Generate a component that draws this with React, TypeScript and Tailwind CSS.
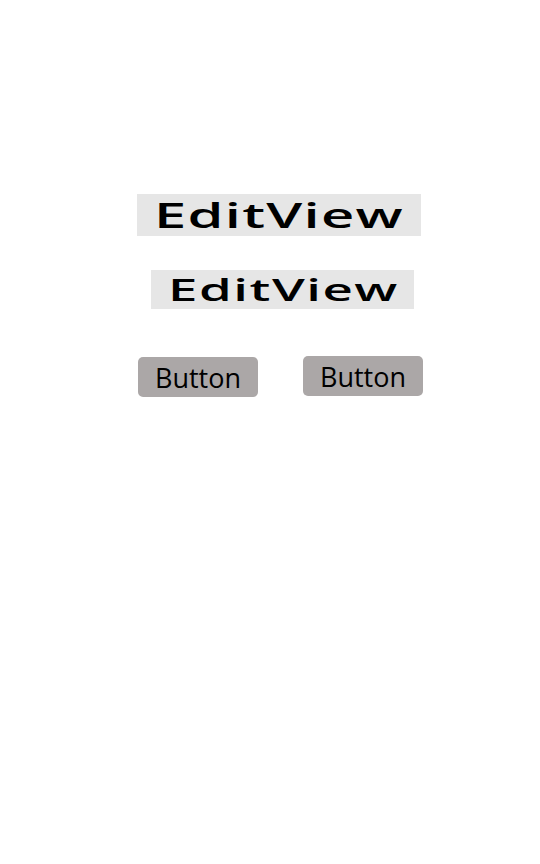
import React from "react";

export default function App() {
  return (
    <div
      className="min-h-[864px] w-[540px] bg-white pt-[194px]"
      style={{ fontFamily: '"Open Sans", "Noto Sans", sans-serif' }}
    >
      <div className="ml-[137px] flex h-[42px] w-[284px] items-center bg-[#e6e6e6] pl-[17px]">
        <span className="inline-block origin-left scale-x-[1.7] text-[34px] font-[550] leading-none tracking-[0.75px] text-black">
          EditView
        </span>
      </div>
      <div className="ml-[151px] mt-[34px] flex h-[39px] w-[263px] items-center bg-[#e6e6e6] pl-[17px]">
        <span className="inline-block origin-left scale-x-[1.7] text-[31px] font-[550] leading-none tracking-[0.9px] text-black">
          EditView
        </span>
      </div>
      <div className="mt-[47px] flex items-start">
        <div className="ml-[138px] mt-px flex h-[40px] w-[120px] items-center justify-center rounded-[5px] bg-[#aba7a7] text-[27px] font-medium leading-none text-black">
          Button
        </div>
        <div className="ml-[45px] flex h-[40px] w-[120px] items-center justify-center rounded-[5px] bg-[#aba7a7] text-[27px] font-medium leading-none text-black">
          Button
        </div>
      </div>
    </div>
  );
}
